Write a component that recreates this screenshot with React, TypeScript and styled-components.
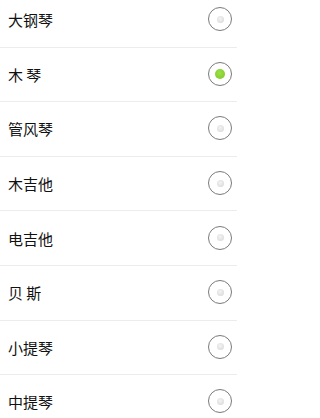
import React, { useState } from "react";
import styled, { createGlobalStyle } from "styled-components";

const Global = createGlobalStyle`
  html, body { margin: 0; padding: 0; background: #fff; }
  body { font-family: "Noto Sans CJK SC", "Noto Sans", sans-serif; overflow: hidden; }
`;

const List = styled.ul`
  list-style: none;
  width: 237px;
  margin: -7px 0 0 0;
  padding: 0;
`;

const Row = styled.li`
  display: flex;
  align-items: center;
  justify-content: space-between;
  height: 53.6px;
  padding: 0 5px 0 8px;
  border-bottom: 1px solid #ececec;
  cursor: pointer;
`;

const Label = styled.span`
  font-size: 15px;
  color: #111;
`;

const Radio = styled.span<{ $checked: boolean }>`
  box-sizing: border-box;
  width: 24px;
  height: 24px;
  border: 1.5px solid #7a7a7a;
  border-radius: 50%;
  display: flex;
  align-items: center;
  justify-content: center;
  margin-top: -1px;
  &::after {
    content: "";
    display: block;
    width: ${(p) => (p.$checked ? "10px" : "7px")};
    height: ${(p) => (p.$checked ? "10px" : "7px")};
    border-radius: 50%;
    background: ${(p) =>
      p.$checked
        ? "radial-gradient(circle at 45% 40%, #9be04a, #7cc61f)"
        : "radial-gradient(circle at 45% 40%, #f4f4f4, #d4d4d4)"};
  }
`;

const items = ["大钢琴", "木 琴", "管风琴", "木吉他", "电吉他", "贝 斯", "小提琴", "中提琴"];

export default function App() {
  const [sel, setSel] = useState(1);
  return (
    <>
      <Global />
      <List>
        {items.map((t, i) => (
          <Row key={t} onClick={() => setSel(i)}>
            <Label>{t}</Label>
            <Radio $checked={sel === i} />
          </Row>
        ))}
      </List>
    </>
  );
}
